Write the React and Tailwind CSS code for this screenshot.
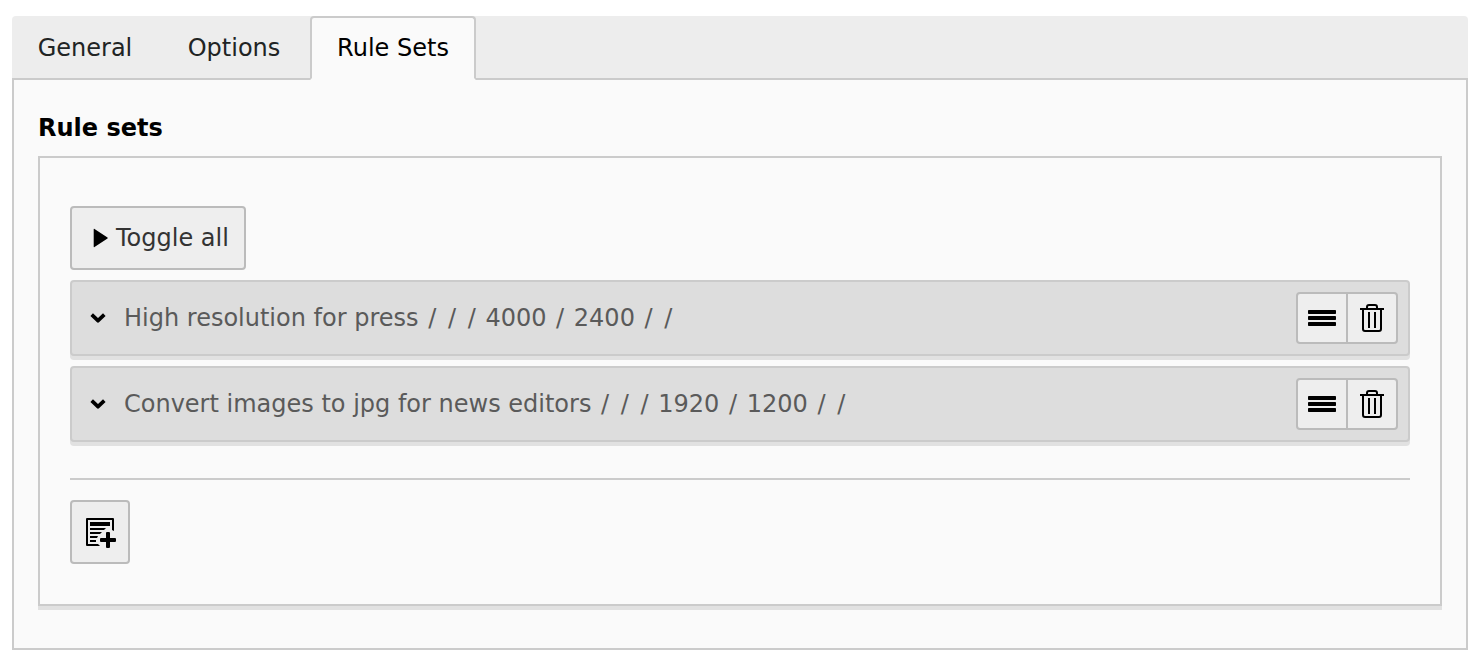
import React, { useState } from "react";

const tabs = [
  { label: "General", width: "w-[146px]" },
  { label: "Options", width: "w-[144px]" },
  { label: "Rule Sets", width: "w-[166px]" },
];

const ruleSets = [
  ["High resolution for press", "", "", "4000", "2400", "", ""],
  ["Convert images to jpg for news editors", "", "", "1920", "1200", "", ""],
];

function CaretIcon() {
  return (
    <svg className="h-8 w-8 shrink-0" viewBox="0 0 32 32" aria-hidden="true">
      <path d="M9.700 7.300v17.400a.5.5 0 0 0 .8.4l13-8.700a.5.5 0 0 0 0-.8l-13-8.700a.5.5 0 0 0-.8.4z" />
    </svg>
  );
}

function ChevronIcon() {
  return (
    <svg className="h-8 w-8 shrink-0" viewBox="0 0 32 32" aria-hidden="true">
      <path
        d="M9.700 12.700l6.300 6 6.300-6"
        fill="none"
        stroke="currentColor"
        strokeWidth="3.700"
        strokeLinejoin="round"
      />
    </svg>
  );
}

function DragIcon() {
  return (
    <svg className="h-8 w-8" viewBox="0 0 32 32" aria-hidden="true">
      <rect x="2" y="8" width="28" height="4" rx="0.7" />
      <rect x="2" y="14" width="28" height="4" rx="0.7" />
      <rect x="2" y="20" width="28" height="4" rx="0.7" />
    </svg>
  );
}

function TrashIcon() {
  return (
    <svg className="h-8 w-8" viewBox="0 0 32 32" fill="none" stroke="currentColor" strokeWidth="2" aria-hidden="true">
      <path d="M4 7h24M11 7V5a2 2 0 0 1 2-2h6a2 2 0 0 1 2 2v2M7 7v20a2 2 0 0 0 2 2h14a2 2 0 0 0 2-2V7M13 10v16M19 10v16" />
    </svg>
  );
}

function AddRecordIcon() {
  return (
    <svg className="h-8 w-8" viewBox="0 0 32 32" aria-hidden="true">
      <path d="M3 2h26a1 1 0 0 1 1 1v12l-2-1V4H4v24h10l2 2H3a1 1 0 0 1-1-1V3a1 1 0 0 1 1-1z" />
      <path d="M6 6h20v4H6zM6 12h16l-2 2H6zM6 16h12l-2 2H6zM6 20h8l-1 2H6zM6 24h6v2H6z" />
      <path d="M23 16h2a1 1 0 0 1 1 1v5h5a1 1 0 0 1 1 1v2a1 1 0 0 1-1 1h-5v5a1 1 0 0 1-1 1h-2a1 1 0 0 1-1-1v-5h-5a1 1 0 0 1-1-1v-2a1 1 0 0 1 1-1h5v-5a1 1 0 0 1 1-1z" />
    </svg>
  );
}

function RuleSetRow({ fields }) {
  const [title, ...values] = fields;
  return (
    <li className="flex items-center justify-between rounded border-2 border-[#cbcbcb] bg-[#ddd] p-2.5 shadow-[0_4px_0_#e1e1e1]">
      <button type="button" className="flex min-w-0 grow items-center gap-2.5 text-left">
        <ChevronIcon />
        <span className="text-[#5a5a5a]">
          {title}
          {values.map((value, index) => (
            <React.Fragment key={index}>
              {" "}
              <span className="mx-0.5">/</span>
              {value && ` ${value}`}
            </React.Fragment>
          ))}
        </span>
      </button>
      <div className="flex shrink-0 rounded border-2 border-[#bbb] bg-[#eee]">
        <button type="button" aria-label="Drag to sort" className="grid h-12 w-12 place-items-center">
          <DragIcon />
        </button>
        <button type="button" aria-label="Delete" className="grid h-12 w-[50px] place-items-center border-l-2 border-[#bbb]">
          <TrashIcon />
        </button>
      </div>
    </li>
  );
}

export default function App() {
  const [active, setActive] = useState("Rule Sets");

  return (
    <main className="bg-white px-3 pt-4 pb-3.5 font-['DejaVu_Sans',Verdana,sans-serif] text-2xl text-black">
      <div role="tablist" className="flex h-16 gap-1 rounded-t border-b-2 border-[#cbcbcb] bg-[#ededed]">
        {tabs.map((tab) => (
          <button
            key={tab.label}
            type="button"
            role="tab"
            aria-selected={active === tab.label}
            onClick={() => setActive(tab.label)}
            className={`${tab.width} -mb-0.5 h-16 shrink-0 whitespace-nowrap rounded-t border-2 ${
              active === tab.label
                ? "border-[#cbcbcb] border-b-[#fafafa] bg-[#fafafa]"
                : "border-transparent text-[#212424]"
            }`}
          >
            {tab.label}
          </button>
        ))}
      </div>
      <section className="border-2 border-t-0 border-[#cbcbcb] bg-[#fafafa] px-6 pt-8 pb-[42px]">
        <h2 className="mb-3 font-bold">Rule sets</h2>
        <div className="border-2 border-[#cbcbcb] px-[30px] pt-12 pb-10 shadow-[0_4px_0_#e1e1e1]">
          <button
            type="button"
            className="flex h-16 w-44 items-center whitespace-nowrap rounded border-2 border-[#bbb] bg-[#eee] pl-3 text-[#333]"
          >
            <span className="text-black"><CaretIcon /></span>
            Toggle all
          </button>
          <ul className="mt-2.5 flex flex-col gap-2.5">
            {ruleSets.map((fields) => (
              <RuleSetRow key={fields[0]} fields={fields} />
            ))}
          </ul>
          <hr className="mt-9 mb-5 border-t-2 border-[#cbcbcb]" />
          <button
            type="button"
            aria-label="Add rule set"
            className="grid h-16 w-[60px] place-items-center rounded border-2 border-[#bbb] bg-[#eee]"
          >
            <AddRecordIcon />
          </button>
        </div>
      </section>
    </main>
  );
}
